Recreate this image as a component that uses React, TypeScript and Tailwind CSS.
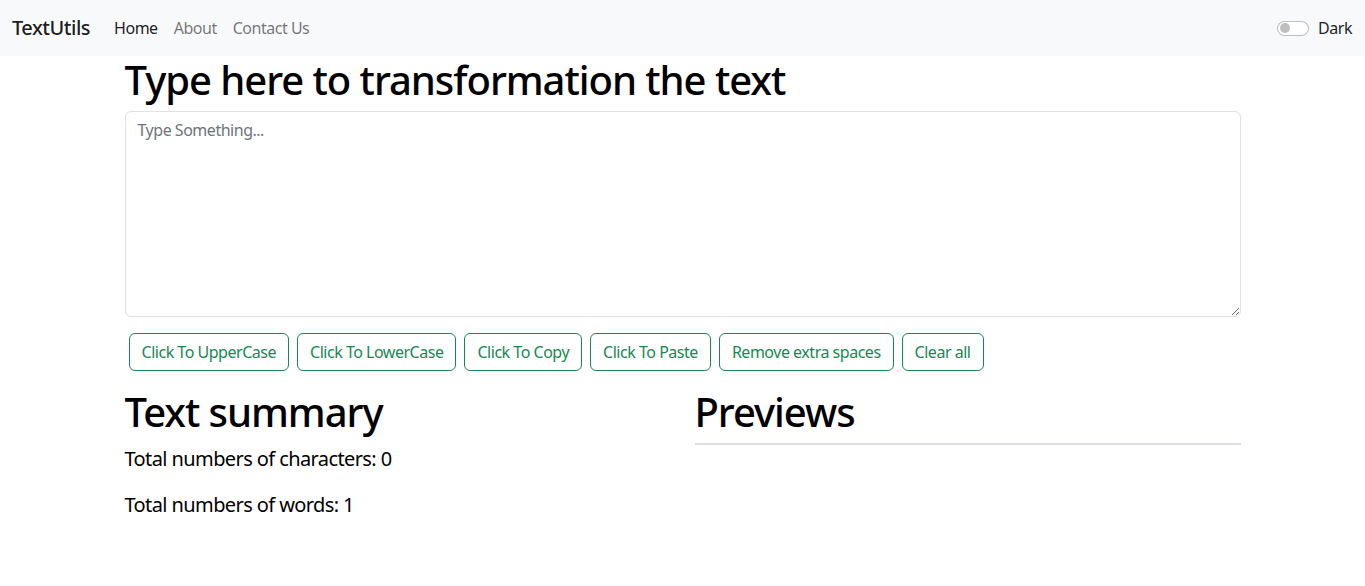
export default function App() {
	const buttons = [
		"Click To UpperCase",
		"Click To LowerCase",
		"Click To Copy",
		"Click To Paste",
		"Remove extra spaces",
		"Clear all",
	];

	return (
		<div className="min-h-screen bg-white text-black tracking-[-0.03em] font-['Noto_Sans',sans-serif]">
			{/* navbar */}
			<nav className="flex h-[56px] items-center justify-between bg-[#f8f9fa] px-3">
				<div className="flex items-center">
					<a href="#" className="mr-4 text-[20px] font-medium text-black/90">
						TextUtils
					</a>
					<ul className="flex items-center">
						<li>
							<a href="#" className="px-2 text-[16px] text-black/90">
								Home
							</a>
						</li>
						<li>
							<a href="#" className="px-2 text-[16px] text-black/55">
								About
							</a>
						</li>
						<li>
							<a href="#" className="px-2 text-[16px] text-black/55">
								Contact Us
							</a>
						</li>
					</ul>
				</div>
				<div className="flex items-center gap-[9px] pr-[1px]">
					<span className="flex h-[15px] w-[32px] items-center rounded-full border border-black/25 bg-white px-[2px]">
						<span className="h-[10px] w-[10px] rounded-full bg-[#bfbfbf]" />
					</span>
					<label className="text-[16px] text-[#212529]">Dark</label>
				</div>
			</nav>

			<div className="mx-auto w-[1116px]">
				<h1 className="mb-[7px] text-[40px] font-medium leading-[1.2] tracking-[-0.026em]">
					Type here to transformation the text
				</h1>
				<textarea
					rows={8}
					placeholder="Type Something..."
					className="block h-[206px] w-full resize-y rounded-[6px] border border-[#dee2e6] px-3 py-[6px] text-[16px] leading-[1.5] placeholder:text-[#6c757d] focus:outline-none"
				/>
				<div className="mt-4 flex flex-wrap gap-2 pl-1">
					{buttons.map((b) => (
						<button
							key={b}
							className="h-[38px] rounded-[6px] border border-[#198754] px-3 text-[16px] text-[#198754]"
						>
							{b}
						</button>
					))}
				</div>

				<div className="mt-[17px] grid grid-cols-2 gap-6">
					<div>
						<h1 className="mb-2 text-[40px] font-medium leading-[1.2] tracking-[-0.026em]">
							Text summary
						</h1>
						<p className="mb-4 text-[20px] leading-[1.5] tracking-[-0.03em]">
							Total numbers of characters: 0
						</p>
						<p className="mb-4 text-[20px] leading-[1.5] tracking-[-0.03em]">
							Total numbers of words: 1
						</p>
					</div>
					<div>
						<h1 className="text-[40px] font-medium leading-[1.2] tracking-[-0.026em]">Previews</h1>
						<hr className="mt-[7px] border-t-2 border-[#dfe0e3]" />
					</div>
				</div>
			</div>
		</div>
	);
}
